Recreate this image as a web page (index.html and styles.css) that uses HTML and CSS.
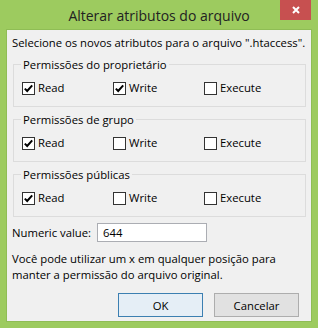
FILE: index.html
```html
<!DOCTYPE html>
<html>
<head>
<meta charset="utf-8">
<link rel="stylesheet" href="styles.css">
</head>
<body>
<div class="window">
  <div class="titlebar">
    <div class="title">Alterar atributos do arquivo</div>
    <div class="close"><svg width="10" height="10" viewBox="0 0 10 10"><path d="M2 2 L8 8 M8 2 L2 8" stroke="#fff" stroke-width="2"/></svg></div>
  </div>
  <div class="client">
    <p class="intro">Selecione os novos atributos para o arquivo ".htaccess".</p>

    <fieldset class="group">
      <legend>Permissões do proprietário</legend>
      <div class="row">
        <label class="cb"><span class="box checked"><svg width="11" height="11" viewBox="0 0 11 11"><path d="M1.8 5.6 L4.2 8 L9.2 2.4" fill="none" stroke="#000" stroke-width="2"/></svg></span>Read</label>
        <label class="cb"><span class="box checked"><svg width="11" height="11" viewBox="0 0 11 11"><path d="M1.8 5.6 L4.2 8 L9.2 2.4" fill="none" stroke="#000" stroke-width="2"/></svg></span>Write</label>
        <label class="cb"><span class="box"></span>Execute</label>
      </div>
    </fieldset>

    <fieldset class="group">
      <legend>Permissões de grupo</legend>
      <div class="row">
        <label class="cb"><span class="box checked"><svg width="11" height="11" viewBox="0 0 11 11"><path d="M1.8 5.6 L4.2 8 L9.2 2.4" fill="none" stroke="#000" stroke-width="2"/></svg></span>Read</label>
        <label class="cb"><span class="box"></span>Write</label>
        <label class="cb"><span class="box"></span>Execute</label>
      </div>
    </fieldset>

    <fieldset class="group">
      <legend>Permissões públicas</legend>
      <div class="row">
        <label class="cb"><span class="box checked"><svg width="11" height="11" viewBox="0 0 11 11"><path d="M1.8 5.6 L4.2 8 L9.2 2.4" fill="none" stroke="#000" stroke-width="2"/></svg></span>Read</label>
        <label class="cb"><span class="box"></span>Write</label>
        <label class="cb"><span class="box"></span>Execute</label>
      </div>
    </fieldset>

    <div class="numeric">
      <span class="numlabel">Numeric value:</span>
      <div class="input">644</div>
    </div>

    <p class="hint">Você pode utilizar um x em qualquer posição para manter a permissão do arquivo original.</p>

    <div class="buttons">
      <div class="btn default">OK</div>
      <div class="btn">Cancelar</div>
    </div>
  </div>
</div>
</body>
</html>
```

FILE: styles.css
```css
html, body {
  margin: 0;
  padding: 0;
}
body {
  background: #9dcb5f;
  width: 318px;
  height: 328px;
  overflow: hidden;
  font-family: "Open Sans", "Noto Sans", sans-serif;
  font-size: 11.3px;
  color: #000;
}
.window {
  width: 318px;
  height: 328px;
  position: relative;
}
.titlebar {
  height: 30px;
  display: flex;
  align-items: center;
  justify-content: center;
}
.title {
  font-size: 14px;
  color: #222;
  margin-top: 1px;
}
.close {
  position: absolute;
  top: 0;
  left: 280px;
  width: 31px;
  height: 20px;
  background: #c75050;
  display: flex;
  align-items: center;
  justify-content: center;
}
.close svg { display: block; }
.client {
  margin: 0 7px;
  width: 304px;
  height: 291px;
  background: #f0f0f0;
  box-shadow: 0 0 0 1px #8fbd55;
  box-sizing: border-box;
  padding: 5px 6px 0 5px;
}
.intro {
  margin: 0;
  line-height: 16px;
  white-space: nowrap;
}
.group {
  margin: 5px 0 0 1px;
  width: 293px;
  box-sizing: border-box;
  border: 1px solid #dcdcdc;
  padding: 8px 0 10px 8px;
}
.group:first-of-type { margin-top: 6px; }
legend {
  padding: 0 2px;
  line-height: 15px;
  margin-left: -1px;
}
.row {
  display: grid;
  grid-template-columns: 91px 91px 91px;
  height: 16px;
}
.cb {
  display: flex;
  align-items: center;
  gap: 3px;
  line-height: 16px;
}
.box {
  width: 13px;
  height: 13px;
  box-sizing: border-box;
  border: 1px solid #333;
  background: #fff;
  display: flex;
  align-items: center;
  justify-content: center;
}
.box svg { display: block; }
.numeric {
  display: flex;
  align-items: center;
  margin-top: 6px;
  height: 19px;
}
.numlabel {
  width: 85px;
}
.input {
  width: 110px;
  height: 19px;
  box-sizing: border-box;
  border: 1px solid #abadb3;
  background: #fff;
  padding-left: 5px;
  line-height: 17px;
}
.hint {
  margin: 9px 0 0 0;
  line-height: 16px;
  width: 290px;
}
.buttons {
  display: flex;
  justify-content: flex-end;
  gap: 11px;
  margin-top: 10px;
  padding-right: 6px;
}
.btn {
  width: 85px;
  height: 24px;
  box-sizing: border-box;
  border: 1px solid #adadad;
  background: #e1e1e1;
  display: flex;
  align-items: center;
  justify-content: center;
}
.btn.default {
  border-color: #3c7fb1;
  background: #e5eef6;
}
```
